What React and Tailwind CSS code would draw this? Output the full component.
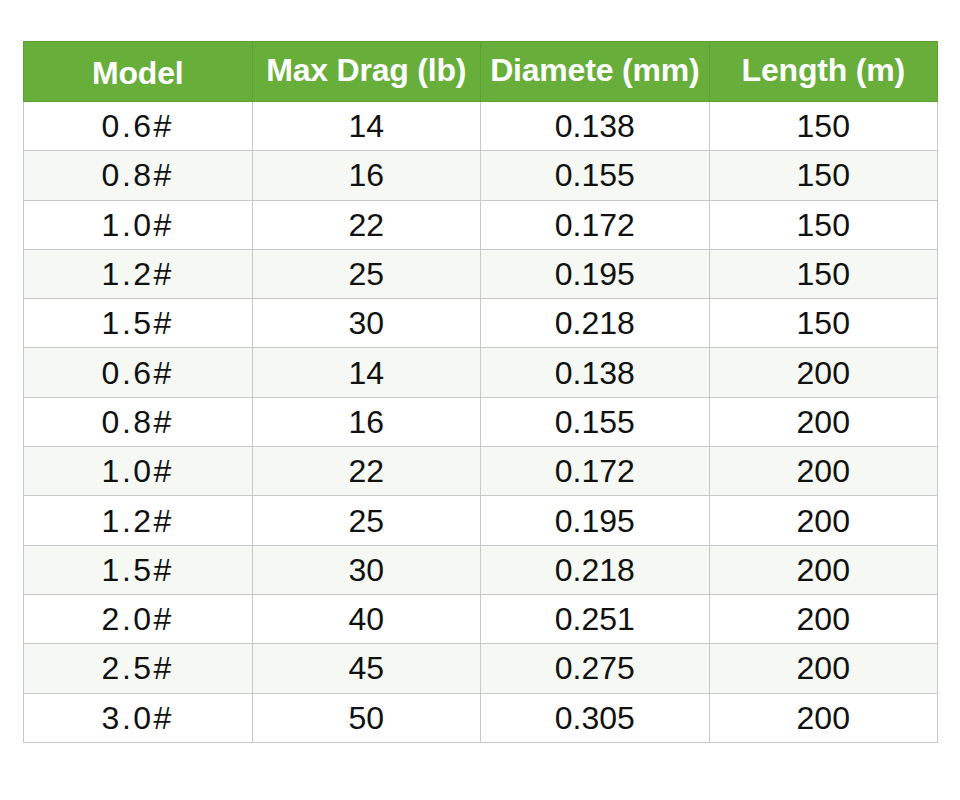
const rows = [
  ['0.6#', '14', '0.138', '150'],
  ['0.8#', '16', '0.155', '150'],
  ['1.0#', '22', '0.172', '150'],
  ['1.2#', '25', '0.195', '150'],
  ['1.5#', '30', '0.218', '150'],
  ['0.6#', '14', '0.138', '200'],
  ['0.8#', '16', '0.155', '200'],
  ['1.0#', '22', '0.172', '200'],
  ['1.2#', '25', '0.195', '200'],
  ['1.5#', '30', '0.218', '200'],
  ['2.0#', '40', '0.251', '200'],
  ['2.5#', '45', '0.275', '200'],
  ['3.0#', '50', '0.305', '200'],
];

const headers = ['Model', 'Max Drag (lb)', 'Diamete (mm)', 'Length (m)'];

export default function App() {
  return (
    <div className="w-[960px] h-[800px] bg-white pt-[41px] pl-[23px] font-['Liberation_Sans',Arial,sans-serif]">
      <table className="w-[915px] border-collapse table-fixed">
        <thead>
          <tr className="h-[60px] bg-[#67ae3b]">
            {headers.map((h, i) => (
              <th
                key={h}
                className={`border border-[#5e9f36] text-white text-[32px] font-bold leading-none whitespace-nowrap tracking-[-0.2px] ${i === 0 ? 'pt-[3px]' : 'pb-[3px]'}`}
              >
                {h}
              </th>
            ))}
          </tr>
        </thead>
        <tbody>
          {rows.map((r, i) => (
            <tr key={i} className={`h-[49.3px] ${i % 2 === 1 ? 'bg-[#f6f9f3]' : 'bg-white'}`}>
              {r.map((c, j) => (
                <td
                  key={j}
                  className={`border border-[#c8c8c8] text-center text-[32px] leading-none text-[#111] ${j === 0 ? 'tracking-[2.5px]' : ''}`}
                >
                  {c}
                </td>
              ))}
            </tr>
          ))}
        </tbody>
      </table>
    </div>
  );
}
